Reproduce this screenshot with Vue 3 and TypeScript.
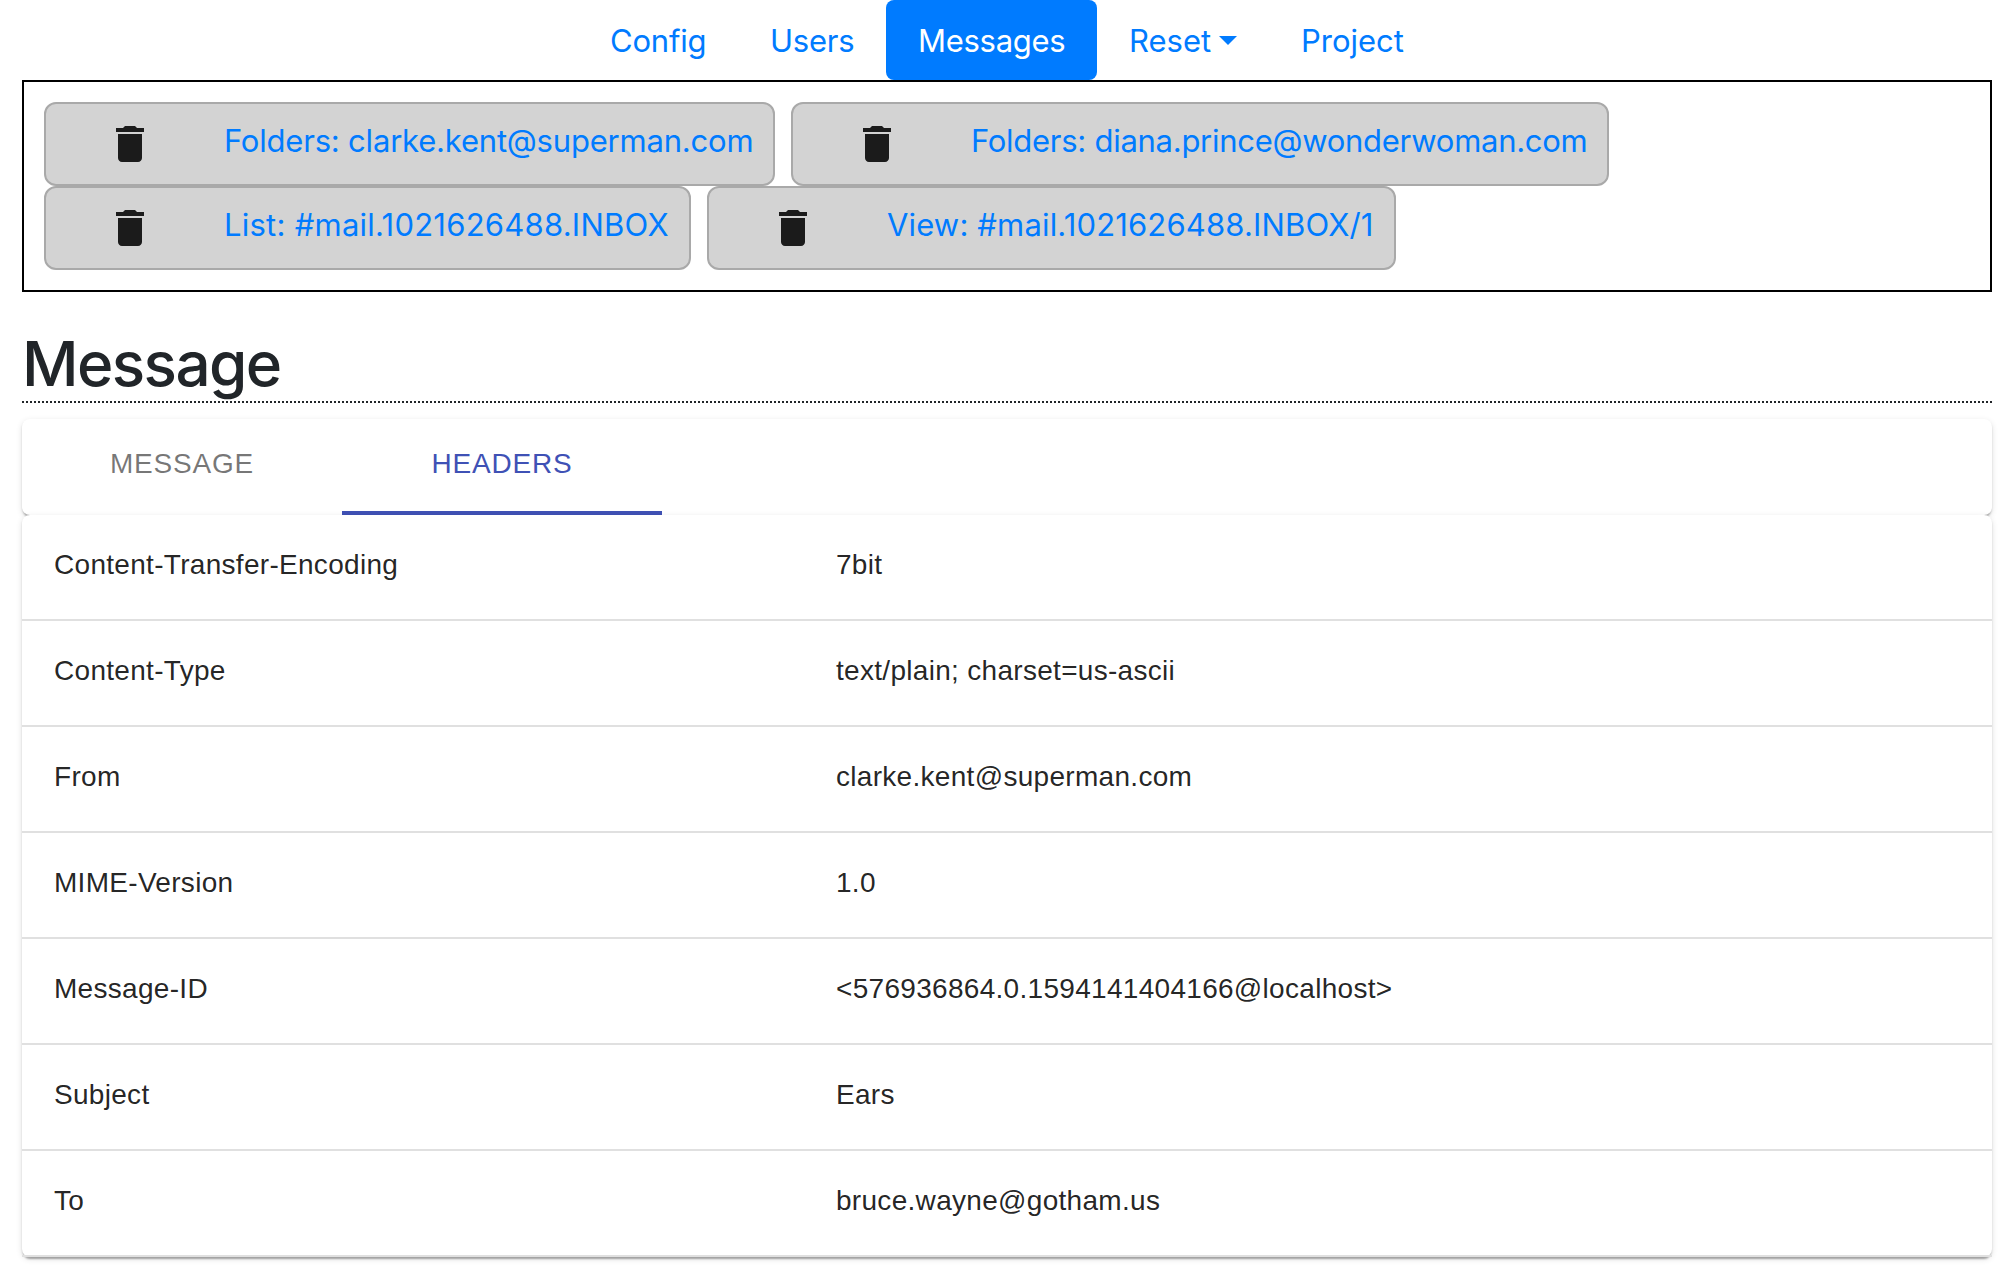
<script setup lang="ts">
interface NavItem { label: string; active?: boolean; dropdown?: boolean; kind: string }
interface Chip { label: string; kind: string }

const nav: NavItem[] = [
  { label: 'Config', kind: 'config' },
  { label: 'Users', kind: 'users' },
  { label: 'Messages', kind: 'messages', active: true },
  { label: 'Reset', kind: 'reset', dropdown: true },
  { label: 'Project', kind: 'project' },
]

const chips: Chip[] = [
  { label: 'Folders: clarke.kent@superman.com', kind: 'clarke' },
  { label: 'Folders: diana.prince@wonderwoman.com', kind: 'diana' },
  { label: 'List: #mail.1021626488.INBOX', kind: 'list' },
  { label: 'View: #mail.1021626488.INBOX/1', kind: 'view' },
]

const headers: [string, string][] = [
  ['Content-Transfer-Encoding', '7bit'],
  ['Content-Type', 'text/plain; charset=us-ascii'],
  ['From', 'clarke.kent@superman.com'],
  ['MIME-Version', '1.0'],
  ['Message-ID', '<576936864.0.1594141404166@localhost>'],
  ['Subject', 'Ears'],
  ['To', 'bruce.wayne@gotham.us'],
]
</script>

<template>
  <div class="page">
    <nav class="nav">
      <a v-for="n in nav" :key="n.label" class="nav-link" :class="[n.kind, { active: n.active }]">
        <span class="label">{{ n.label }}</span><i v-if="n.dropdown" class="caret"></i>
      </a>
    </nav>

    <section class="history">
      <div v-for="c in chips" :key="c.label" class="chip" :class="c.kind">
        <svg class="trash" viewBox="0 0 24 24"><path d="M6 19c0 1.100.9 2 2 2h8c1.100 0 2-.9 2-2V7H6v12zM19 4h-3.500l-1-1h-5l-1 1H5v2h14V4z" /></svg>
        <a class="chip-link">{{ c.label }}</a>
      </div>
    </section>

    <h1 class="title">Message</h1>
    <div class="rule"></div>

    <div class="paper tabs">
      <button class="tab">Message</button>
      <button class="tab selected">Headers</button>
    </div>

    <div class="paper table">
      <div v-for="h in headers" :key="h[0]" class="row">
        <div class="cell name">{{ h[0] }}</div>
        <div class="cell">{{ h[1] }}</div>
      </div>
    </div>
  </div>
</template>

<style>
body { margin: 0; background: #fff; }
</style>

<style scoped>
.page {
  box-sizing: border-box;
  height: 1282px;
  padding: 0 16px 0 22px;
  overflow: hidden;
  font-family: Inter, "Liberation Sans", sans-serif;
  color: #212529;
}
.nav { display: flex; justify-content: center; height: 80px; }
.nav-link {
  box-sizing: border-box;
  display: flex;
  align-items: center;
  height: 80px;
  padding: 2px 32px 0;
  font-size: 31px;
  line-height: 48px;
  color: #007bff;
  border-radius: 8px;
  white-space: nowrap;
}
.nav-link.active { background: #007bff; color: #fff; }
.config { width: 160px; letter-spacing: -.2px; }
.users { width: 148px; letter-spacing: -.25px; }
.messages { width: 211px; letter-spacing: -.28px; }
.reset { width: 172px; }
.project { width: 167px; }
.caret {
  margin: -2px 0 0 8px;
  border-top: 9.600px solid;
  border-left: 9.600px solid transparent;
  border-right: 9.600px solid transparent;
}
.history {
  box-sizing: border-box;
  height: 212px;
  padding: 20px;
  border: 2px solid #000;
  display: flex;
  flex-wrap: wrap;
  align-content: flex-start;
  column-gap: 16px;
}
.chip {
  box-sizing: border-box;
  display: flex;
  height: 84px;
  border: 2px solid darkgray;
  border-radius: 12px;
  background: lightgray;
  padding: 13px 0 0 60px;
}
.trash { flex: none; width: 48px; height: 48px; margin: 3px 70px 0 0; fill: #1b1b1b; }
.chip-link {
  font-size: 31px;
  line-height: 48px;
  letter-spacing: -.2px;
  color: #007bff;
  white-space: nowrap;
}
.clarke { width: 731px; }
.diana { width: 818px; margin-right: 200px; }
.diana .chip-link { letter-spacing: -.27px; }
.list { width: 647px; }
.list .chip-link { letter-spacing: .24px; }
.view { width: 689px; }
.view .chip-link { letter-spacing: .15px; }
.title {
  margin: 34px 0 0;
  height: 75px;
  font-size: 62px;
  line-height: 76px;
  font-weight: 500;
  letter-spacing: -1.600px;
}
.rule { height: 2px; background: repeating-linear-gradient(90deg, #212529 0 2px, transparent 2px 4px); }
.paper {
  background: #fff;
  border-radius: 8px;
  box-shadow: 0 4px 2px -2px rgba(0, 0, 0, .2), 0 2px 2px 0 rgba(0, 0, 0, .14), 0 2px 6px 0 rgba(0, 0, 0, .12);
  font-family: "Liberation Sans", Arial, sans-serif;
  font-size: 28px;
}
.tabs { display: flex; height: 96px; margin-top: 16px; }
.tab {
  width: 320px;
  border: 0;
  border-bottom: 4px solid transparent;
  background: none;
  padding: 0 0 4px;
  font: inherit;
  line-height: 49px;
  letter-spacing: .8px;
  text-transform: uppercase;
  color: rgba(0, 0, 0, .54);
}
.tab.selected { color: #3f51b5; border-color: #3f51b5; }
.table { position: relative; }
.row {
  box-sizing: border-box;
  display: flex;
  height: 106px;
  border-bottom: 2px solid #e0e0e0;
}
.cell { padding: 30px 0 32px 32px; line-height: 40px; letter-spacing: .3px; color: rgba(0, 0, 0, .87); white-space: nowrap; }
.name { box-sizing: border-box; width: 782px; }
</style>
